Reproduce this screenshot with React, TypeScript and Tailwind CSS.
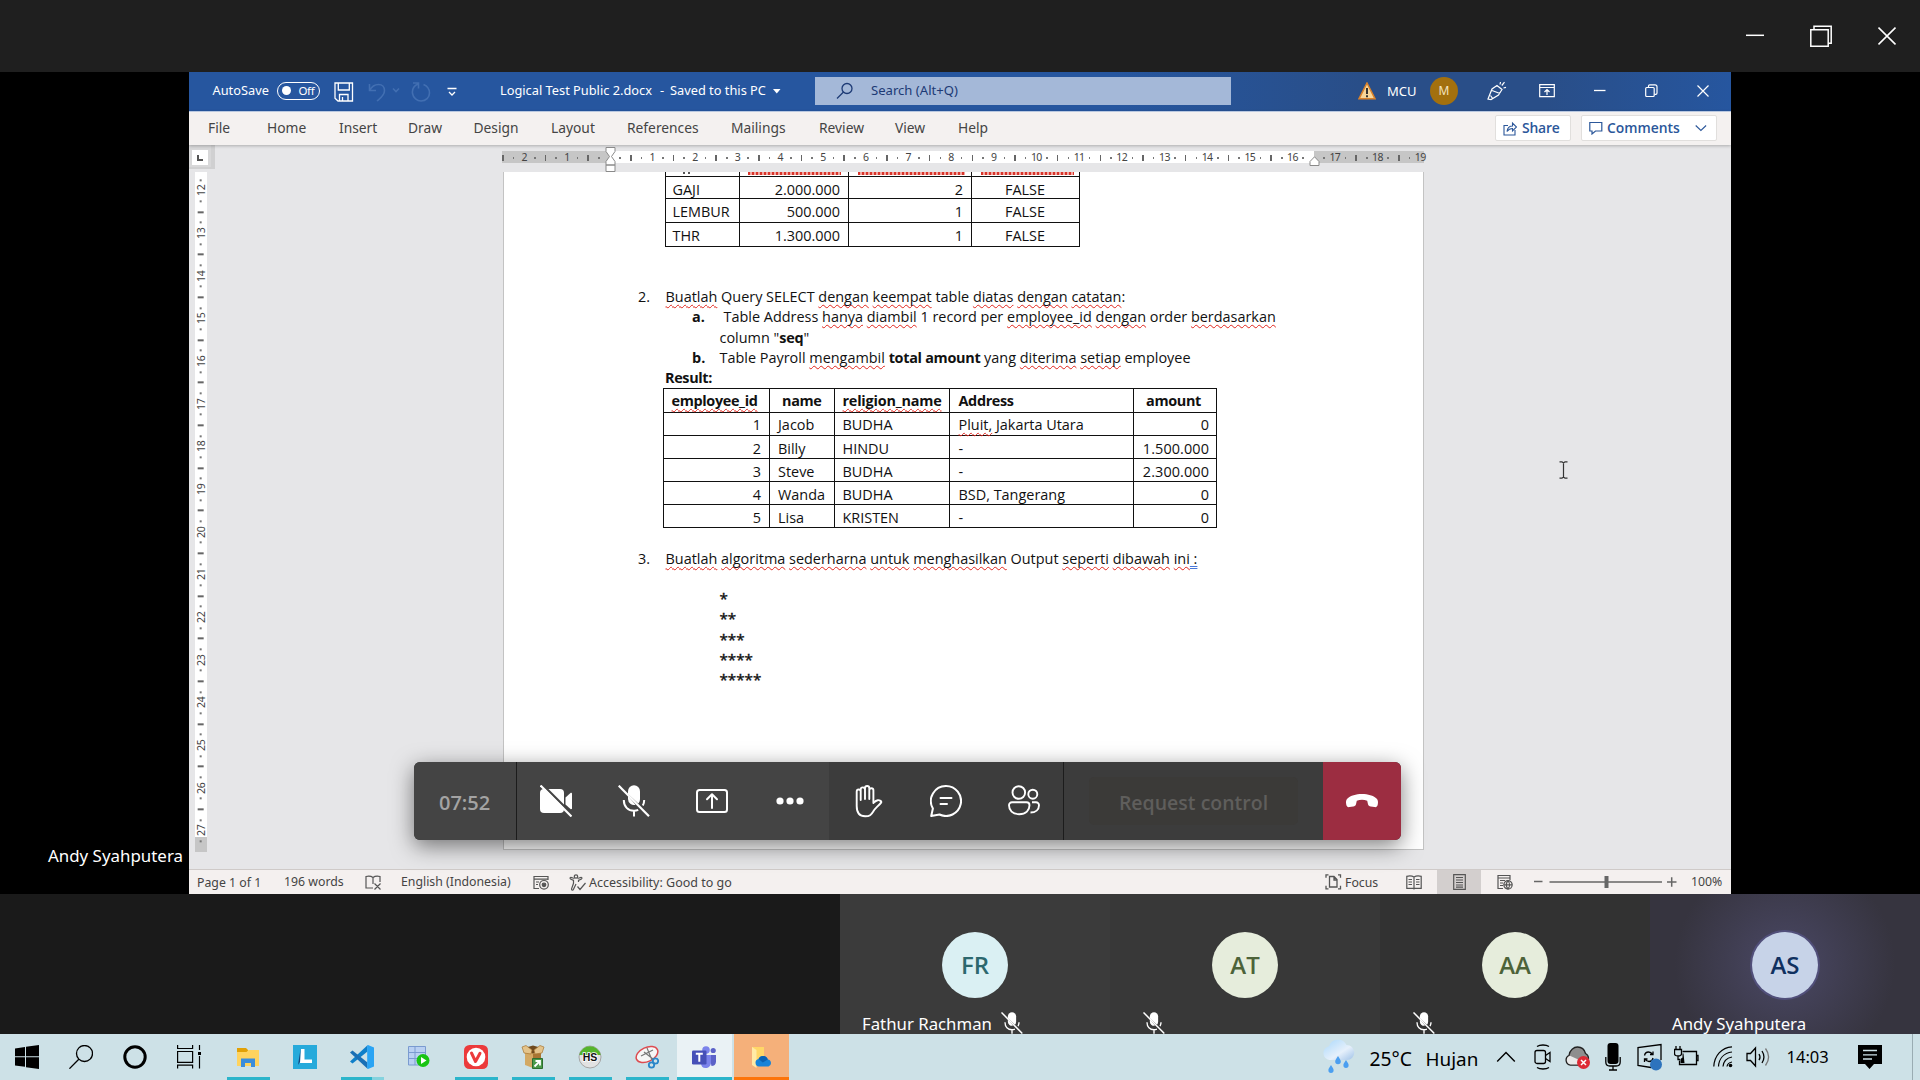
import type { ReactNode } from "react";

/* ---------- helpers ---------- */

function Misspelled({ children }: { children: ReactNode }) {
  return (
    <span className="underline decoration-[#e0241b] decoration-wavy decoration-[1.250px] underline-offset-[2px] [text-decoration-skip-ink:none]">
      {children}
    </span>
  );
}

function MicOff({ className }: { className?: string }) {
  return (
    <svg viewBox="0 0 32 32" className={className} fill="none" stroke="#fff" strokeWidth="2">
      <path d="M10 9V6.3a6 6 0 0 1 12 0V14c0 1.8-.6 3.300-1.700 4.400z" fill="#fff" stroke="none" />
      <path d="M10 11v3a6 6 0 0 0 7.500 5.800z" fill="#fff" stroke="none" />
      <path d="M5.800 15c0 6.500 4.200 10.800 10.200 10.800 1.600 0 3-.3 4.200-.9M26.200 15c0 2.100-.5 4-1.400 5.600M16 26v5.500" />
      <path d="M.7.7 31 31.200" strokeWidth="2.200" />
    </svg>
  );
}

/* ---------- Teams window chrome ---------- */

function TeamsTitleBar() {
  return (
    <div className="flex h-[72px] items-center justify-end bg-[#1f1f1f] pr-6">
      <svg width="18" height="22" fill="none" stroke="#fff" strokeWidth="1.500">
        <path d="M0 10.300h18" />
      </svg>
      <svg width="22" height="22" className="ml-[46px]" fill="none" stroke="#fff" strokeWidth="1.500">
        <path d="M.8 4.800h17.400v16.400H.8zM4 4.500V1.300h17.200v17H18.500" />
      </svg>
      <svg width="18" height="22" className="ml-[46px]" fill="none" stroke="#fff" strokeWidth="1.600">
        <path d="m.5 2.500 17 17M17.500 2.500l-17 17" />
      </svg>
    </div>
  );
}

/* ---------- Word: title bar ---------- */

function WordTitleBar() {
  return (
    <div className="flex h-[39px] items-center bg-[#26569f] bg-[linear-gradient(90deg,#26569f_0%,#26569f_60%,#294e88_76%,#294e88_88%,#26569f_100%)] pb-[2px] text-[12.8px] text-white">
      <div className="ml-[23.5px] w-[64.500px]">AutoSave</div>
      <div className="flex h-[18px] w-[43px] items-center rounded-full border border-white pl-[4px] text-[11.5px] tracking-[-0.4px]">
        <span className="h-[9px] w-[9px] rounded-full bg-white" />
        <span className="ml-[7.500px]">Off</span>
      </div>
      <svg width="20" height="20" className="ml-[14px] mt-[2px]" fill="none" stroke="#fff" strokeWidth="1.300">
        <path d="M1 1h17.500v18H4L1 16.200zM4.300 1v7h11V1M5.500 19v-6.500h8.500V19M8.500 19v-4" />
      </svg>
      <svg width="34" height="22" className="ml-[14px] mt-[2px]" fill="none" stroke="#426fb2" strokeWidth="1.600">
        <path d="M1.500 3v6.500H8M1.500 9.500C4 5 7 3.500 10.500 3.500c4 0 6 3 6 6 0 5-4 7.500-7.500 10.500" />
        <path d="m25 7.500 3 3 3-3" />
      </svg>
      <svg width="20" height="22" className="ml-[9px] mt-[2px]" fill="none" stroke="#426fb2" strokeWidth="1.600">
        <path d="M2 2h5.500v5.500M7 3C2.500 5 1 8.500 1.500 12.500 2.300 17 6 20 10 20c5 0 8.500-3.500 8.500-8 0-4-2.500-7-6-8.500" />
      </svg>
      <svg width="10" height="10" className="ml-[16px] mt-[2px]" fill="none" stroke="#fff" strokeWidth="1.300">
        <path d="M.5 1.500h9M2 5l3 3 3-3" />
      </svg>
      <div className="ml-[43px] w-[160px] whitespace-nowrap">Logical Test Public 2.docx</div>
      <div className="w-[10px]">-</div>
      <div className="w-[103px] whitespace-nowrap">Saved to this PC</div>
      <svg width="8" height="5" className="mt-px" fill="#fff">
        <path d="M0 0h7.500L3.800 4.500z" />
      </svg>
      <div className="ml-[34px] flex h-[28px] w-[416px] items-center bg-[#a4b8d8] text-[13.1px] text-[#1d3a75]">
        <svg width="18" height="18" className="ml-[21px]" fill="none" stroke="#1d3a75" strokeWidth="1.300">
          <circle cx="11" cy="6.500" r="5" />
          <path d="M7.500 10 1 16.500" />
        </svg>
        <span className="ml-[17px]">Search (Alt+Q)</span>
      </div>
      <svg width="18" height="18" className="ml-[127px] mt-px">
        <path d="M9 1 17 16.800H1z" fill="#f7d69a" stroke="#d9822b" strokeWidth="1.500" />
        <path d="M9 6v6M9 13.300v2" stroke="#222" strokeWidth="1.800" />
      </svg>
      <div className="ml-[11px] w-[43px] pt-[2px] text-[13px]">MCU</div>
      <div className="flex h-[28px] w-[28px] items-center justify-center rounded-full bg-[#a3700e] text-[12px] text-[#f3e3c0]">M</div>
      <svg width="20" height="20" className="ml-[29px]" fill="none" stroke="#fff" strokeWidth="1.200">
        <path d="m1 18 4-10 5-3.500 5 4L11.500 14 4 18.500zM3.500 14.500 6 18M5 9.500l8 3M13 3.500l.5-2.500M14.800 4.500 17.500 1.200M16.500 7l2.500-.7" />
      </svg>
      <svg width="16" height="14" className="ml-[32px]" fill="none" stroke="#fff" strokeWidth="1.200">
        <path d="M.7.7h14.600v12H.7zM.7 3.500h14.600M8 11V5.500M5.500 8 8 5.500 10.500 8" />
      </svg>
      <svg width="12" height="12" className="ml-[39px]" stroke="#fff" strokeWidth="1.300">
        <path d="M0 5.500h11.500" />
      </svg>
      <svg width="13" height="14" className="ml-[39px]" fill="none" stroke="#fff" strokeWidth="1.200">
        <rect x=".7" y="3.500" width="8.500" height="9" rx="1" />
        <path d="M3.500 3.500V2c0-.7.400-1.200 1.200-1.200H10c1.200 0 2 .8 2 2V9c0 .8-.5 1.300-1.200 1.300H9.500" />
      </svg>
      <svg width="12" height="12" className="ml-[39px]" stroke="#fff" strokeWidth="1.200">
        <path d="m.5.5 11 11M11.500.5l-11 11" />
      </svg>
    </div>
  );
}

/* ---------- Word: ribbon tabs ---------- */

const tabs: [string, string][] = [
  ["File", "w-[59px]"],
  ["Home", "w-[72px]"],
  ["Insert", "w-[69px]"],
  ["Draw", "w-[65.500px]"],
  ["Design", "w-[77.500px]"],
  ["Layout", "w-[76px]"],
  ["References", "w-[104px]"],
  ["Mailings", "w-[88px]"],
  ["Review", "w-[76px]"],
  ["View", "w-[63px]"],
  ["Help", "w-[60px]"],
];

function WordTabs() {
  return (
    <div className="relative flex h-[34px] items-center border-t border-[#b9c8e0] bg-[#f4f1f0] text-[13.800px] text-[#444] shadow-[0_1px_3px_rgba(0,0,0,0.25)]">
      <div className="ml-[19px] flex">
        {tabs.map(([label, width]) => (
          <div key={label} className={width}>{label}</div>
        ))}
      </div>
      <div className="ml-auto mr-[14px] flex gap-[10px] pb-px font-['Open_Sans'] text-[13.900px] font-semibold tracking-[-0.2px] text-[#2b579a]">
        <div className="flex h-[26px] w-[76px] items-center rounded-[2px] border border-[#e1dfdd] bg-white pl-[7px]">
          <svg width="14" height="15" fill="none" stroke="#2b579a" strokeWidth="1.100">
            <path d="M5 4.500H1v9.500h11V9M4 10.500C4.500 7 6.500 5 9.500 5V2L13.500 6l-4 4V7.500C7 7.500 5.500 8.500 4 10.500z" />
          </svg>
          <span className="ml-[5px]">Share</span>
        </div>
        <div className="flex h-[26px] w-[136px] items-center rounded-[2px] border border-[#e1dfdd] bg-white pl-[7px]">
          <svg width="14" height="14" fill="none" stroke="#2b579a" strokeWidth="1.200">
            <path d="M.8 1.500h12v8.500H6.500L3 13v-3H.8z" />
          </svg>
          <span className="ml-[4px] w-[88px] tracking-[0]">Comments</span>
          <svg width="12" height="8" fill="none" stroke="#2b579a" strokeWidth="1.100">
            <path d="m.7 1.500 5.200 5 5.200-5" />
          </svg>
        </div>
      </div>
    </div>
  );
}

/* ---------- Word: rulers ---------- */

function marks(from: number, to: number): string[] {
  const out: string[] = [];
  for (let n = from; n <= to; n++) out.push("·", "|", "·", String(n));
  return out;
}

function Mark({ m }: { m: string }) {
  return (
    <span className="flex h-full w-[10.673px] shrink-0 items-center justify-center">
      {m === "·" && <span className="h-[2px] w-[1.500px] bg-[#777]" />}
      {m === "|" && <span className="h-[6px] w-[1.500px] bg-[#666]" />}
      {m !== "·" && m !== "|" && <span className="whitespace-nowrap">{m}</span>}
    </span>
  );
}

function HorizontalRuler() {
  return (
    <div className="flex h-[27px]">
      <div className="flex h-[24px] w-[26px] items-center justify-center border-b-2 border-r-4 border-[#d0d0d1] bg-[#d8d8d9] pt-[3px]">
        <div className="flex h-[15px] w-[16px] items-center justify-center bg-white">
          <div className="h-[6px] w-[6px] border-b-2 border-l-2 border-[#555]" />
        </div>
      </div>
      <div className="relative ml-[287px] mt-[6px] flex h-[12px] text-[10.500px] leading-none tracking-[-0.6px] text-[#444]">
        <div className="flex w-[107.500px] bg-[#c6c6c6] pt-px">
          <div className="-ml-[4.500px] flex">
            {["|", "·", "2", "·", "|", "·", "1", "·", "|", "·"].map((m, i) => <Mark key={i} m={m} />)}
          </div>
        </div>
        <div className="flex w-[704px] bg-white pl-[5.300px] pt-px">
          {[...marks(1, 16), "·"].map((m, i) => <Mark key={i} m={m} />)}
        </div>
        <div className="flex w-[110px] bg-[#c6c6c6] pl-[5.300px] pt-px">
          {["·", "17", ...marks(18, 19)].map((m, i) => <Mark key={i} m={m} />)}
        </div>
        <svg width="12" height="26" className="absolute -top-[4px] left-[103px]" fill="#fff" stroke="#8a8a8a">
          <path d="M1 .5h9v4L6.500 9.500 10 14.500v3.500H1v-3.500L4.500 9.500 1 4.500zM1 18h9v6.500H1z" />
        </svg>
        <svg width="12" height="10" className="absolute left-[807px] top-[5px]" fill="#fff" stroke="#8a8a8a">
          <path d="M1 9.500v-4L5.500.8 10 5.500v4z" />
        </svg>
      </div>
    </div>
  );
}

function VerticalRuler() {
  const seq = ["·", "12", ...marks(13, 27)];
  return (
    <div className="ml-[6px] flex h-[680px] w-[12px] flex-col items-center overflow-hidden bg-[linear-gradient(#fff_0_665px,#c6c6c6_665px)] pt-[2.500px] text-[10.500px] leading-none tracking-[-0.4px] text-[#444]">
      {[...seq, "·"].map((m, i) => (
        <span key={i} className="flex h-[10.673px] w-[12px] shrink-0 -rotate-90 items-center justify-center">
          {m === "·" && <span className="h-[2px] w-[1.500px] bg-[#777]" />}
          {m === "|" && <span className="h-[6px] w-[1.500px] bg-[#666]" />}
          {m !== "·" && m !== "|" && <span className="whitespace-nowrap">{m}</span>}
        </span>
      ))}
    </div>
  );
}

/* ---------- Word: document ---------- */

const payroll = [
  ["GAJI", "2.000.000", "2", "FALSE", "h-[22.400px]"],
  ["LEMBUR", "500.000", "1", "FALSE", "h-[24px]"],
  ["THR", "1.300.000", "1", "FALSE", "h-[22.400px]"],
];

function Squiggle({ className }: { className: string }) {
  return (
    <span
      className={"block h-[3px] bg-[repeating-linear-gradient(90deg,#d8352b_0_2px,#f2a49e_2px_4px)] " + className}
    />
  );
}

function PayrollTable() {
  return (
    <div className="ml-[160.500px] w-[415px] border-b-[1.500px] border-l-[1.500px] border-[#111]">
      <div className="grid h-[5px] grid-cols-[74px_109px_123px_108px] border-b-[1.500px] border-[#111] [&>*]:border-r-[1.500px] [&>*]:border-[#111]">
        <div className="flex gap-[3px] pl-[17px]">
          <span className="h-[2px] w-[2px] bg-[#555]" />
          <span className="h-[2px] w-[2px] bg-[#555]" />
        </div>
        <div className="pl-[8px]"><Squiggle className="w-[93px]" /></div>
        <div className="pl-[9px]"><Squiggle className="w-[107px]" /></div>
        <div className="pl-[9px]"><Squiggle className="w-[93px]" /></div>
      </div>
      {payroll.map(([kind, amount, qty, flag, h], i) => (
        <div
          key={kind}
          className={
            "grid grid-cols-[74px_109px_123px_108px] items-stretch border-[#111] [&>*]:border-r-[1.500px] [&>*]:border-[#111] [&>*]:pt-[3px] " +
            h + (i < 2 ? " border-b-[1.500px]" : "")
          }
        >
          <div className="pl-[7px]">{kind}</div>
          <div className="pr-[7.500px] text-right">{amount}</div>
          <div className="pr-[7.500px] text-right">{qty}</div>
          <div className="text-center">{flag}</div>
        </div>
      ))}
    </div>
  );
}

const employees: [string, string, string, ReactNode, string][] = [
  ["1", "Jacob", "BUDHA", <><Misspelled>Pluit,</Misspelled> Jakarta Utara</>, "0"],
  ["2", "Billy", "HINDU", "-", "1.500.000"],
  ["3", "Steve", "BUDHA", "-", "2.300.000"],
  ["4", "Wanda", "BUDHA", "BSD, Tangerang", "0"],
  ["5", "Lisa", "KRISTEN", "-", "0"],
];

function ResultTable() {
  const row =
    "grid grid-cols-[106px_64.500px_115px_184px_83px] border-b-[1.500px] border-[#111] leading-[20px] [&>*]:border-r-[1.500px] [&>*]:border-[#111] [&>*]:pt-[2.500px] ";
  return (
    <div className="ml-[159px] w-[554px] border-l-[1.500px] border-t-[1.500px] border-[#111]">
      <div className={row + "h-[24px] font-bold tracking-[-0.350px]"}>
        <div className="pl-[7.500px]"><Misspelled>employee_id</Misspelled></div>
        <div className="text-center">name</div>
        <div className="pl-[8px] tracking-[-0.2px]"><Misspelled>religion_name</Misspelled></div>
        <div className="pl-[9px]">Address</div>
        <div className="pr-[2px] text-center">amount</div>
      </div>
      {employees.map(([id, name, religion, address, amount]) => (
        <div key={id} className={row + "h-[23.100px]"}>
          <div className="pr-[8px] text-right">{id}</div>
          <div className="pl-[8px]">{name}</div>
          <div className="pl-[8px]">{religion}</div>
          <div className="pl-[9px]">{address}</div>
          <div className="pr-[6.500px] text-right tracking-[0.100px]">{amount}</div>
        </div>
      ))}
    </div>
  );
}

function Page() {
  return (
    <div className="h-[678px] w-[921px] overflow-hidden border-b border-l border-r border-[#c3c3c3] bg-white font-['Open_Sans'] text-[14.430px] leading-[20.400px] text-[#111]">
      <PayrollTable />
      <div className="mt-[40px] flex">
        <div className="ml-[134px] w-[27.500px]">2.</div>
        <div className="whitespace-nowrap">
          <Misspelled>Buatlah</Misspelled> Query SELECT <Misspelled>dengan</Misspelled> <Misspelled>keempat</Misspelled> table{" "}
          <Misspelled>diatas</Misspelled> <Misspelled>dengan</Misspelled> <Misspelled>catatan</Misspelled>:
        </div>
      </div>
      <div className="flex">
        <div className="ml-[188px] w-[31.500px] font-bold">a.</div>
        <div className="whitespace-nowrap">
          Table Address <Misspelled>hanya</Misspelled> <Misspelled>diambil</Misspelled> 1 record per{" "}
          <Misspelled>employee_id</Misspelled> <Misspelled>dengan</Misspelled> order <Misspelled>berdasarkan</Misspelled>
        </div>
      </div>
      <div className="ml-[215.500px]">
        column "<span className="font-bold tracking-[-0.200px]">seq</span>"
      </div>
      <div className="flex">
        <div className="ml-[188px] w-[27.500px] font-bold">b.</div>
        <div className="whitespace-nowrap">
          Table Payroll <Misspelled>mengambil</Misspelled> <span className="font-bold tracking-[-0.300px]">total amount</span> yang{" "}
          <Misspelled>diterima</Misspelled> <Misspelled>setiap</Misspelled> employee
        </div>
      </div>
      <div className="ml-[161px] h-[19.500px] font-bold tracking-[-0.350px]">Result:</div>
      <ResultTable />
      <div className="mt-[21px] flex">
        <div className="ml-[134px] w-[27.500px]">3.</div>
        <div className="whitespace-nowrap">
          <Misspelled>Buatlah</Misspelled> <Misspelled>algoritma</Misspelled> <Misspelled>sederharna</Misspelled>{" "}
          <Misspelled>untuk</Misspelled> <Misspelled>menghasilkan</Misspelled> Output <Misspelled>seperti</Misspelled>{" "}
          <Misspelled>dibawah</Misspelled> <Misspelled>ini</Misspelled>
          <span className="underline decoration-[#4a78d8] decoration-double decoration-1 underline-offset-[2px]">&nbsp;:</span>
        </div>
      </div>
      <div className="ml-[215.500px] mt-[18px] text-[15.200px] [-webkit-text-stroke:0.400px_#111]">
        {["*", "**", "***", "****", "*****"].map((s) => (
          <div key={s} className="h-[20.400px]">{s}</div>
        ))}
      </div>
    </div>
  );
}

/* ---------- Word: status bar ---------- */

function WordStatusBar() {
  return (
    <div className="flex h-[25px] items-center border-t border-[#cfcac8] bg-[#f4f0ef] text-[12.300px] text-[#444]">
      <div className="ml-[8px] w-[87px] pt-[2px]">Page 1 of 1</div>
      <div className="w-[80.500px]">196 words</div>
      <svg width="18" height="15" fill="none" stroke="#555" strokeWidth="1.200">
        <path d="M8 2.500C6 1 3 1 1 1.500v11.500h7M8 2.500V9M8 2.500C10 1 13 1 15 1.500V7M9.500 8.500l6 6M15.500 8.500l-6 6" />
      </svg>
      <div className="ml-[18.500px] w-[132px] whitespace-nowrap">English (Indonesia)</div>
      <svg width="17" height="15" fill="none" stroke="#555" strokeWidth="1.200">
        <path d="M6 13.500H1v-12h14V5M1 4.200h14M3 7h3M3 9.500h2" />
        <circle cx="11" cy="9.800" r="4.300" />
        <circle cx="11" cy="9.800" r="1.800" fill="#555" />
      </svg>
      <svg width="18" height="17" className="ml-[19px]" fill="none" stroke="#555" strokeWidth="1.200">
        <circle cx="7" cy="2.500" r="1.700" />
        <path d="M5.500 4.500C3.500 4 1 2.500 1 4.300c0 1 2 1.500 3.500 2v3L2.500 15c0 1.500 1.500 1.500 2 .3L7 10M8.500 4.500c2-.5 4.500-2 4.500-.2 0 1-2 1.500-3.500 2V8M8.500 12.500l2.500 3 5.500-6.500" />
      </svg>
      <div className="ml-[2px] whitespace-nowrap pt-[2px] text-[12.500px]">Accessibility: Good to go</div>
      <div className="ml-auto flex h-full items-center">
        <svg width="17" height="16" fill="none" stroke="#555" strokeWidth="1.300">
          <path d="M3.500.8H1v3M1 11.800v3h2.500M13 .8h2.500v3M15.500 11.800v3H13M4.500 2.500h4.500l3 3v7.500H4.500zM9 2.500V6h3" />
        </svg>
        <div className="ml-[3px] w-[61px] pt-[2px]">Focus</div>
        <svg width="16" height="15" fill="none" stroke="#555" strokeWidth="1.200">
          <path d="M8 2C6 .8 3 .8.8 1.300v12h6.500l.7.700.7-.7h6.500v-12C13 .8 10 .8 8 2zM8 2v12M2.500 4.500h3.500M2.500 7h3.500M2.500 9.500h3.500M10 4.500h3.500M10 7h3.500M10 9.500h3.500" />
        </svg>
        <div className="ml-[15px] flex h-full w-[44px] items-center justify-center bg-[#d3cfce]">
          <svg width="13" height="16" fill="none" stroke="#555" strokeWidth="1.200">
            <path d="M.7.700h11.600v14.600H.7zM3 3.500h7M3 6h7M3 8.500h7M3 11h7M3 13.200h7" />
          </svg>
        </div>
        <svg width="16" height="16" className="ml-[16px]" fill="none" stroke="#555" strokeWidth="1.200">
          <path d="M6 14.500H1v-13h12V6M1 4h12M3 6.500h5M3 9h3M3 11.500h3" />
          <circle cx="11" cy="10.800" r="4.200" />
          <path d="M7 10.800h8M11 6.600c-2 2.500-2 6 0 8.400 2-2.400 2-6 0-8.400z" />
        </svg>
        <svg width="143" height="16" className="ml-[21px]" fill="none" stroke="#666" strokeWidth="1.500">
          <path d="M0 7.500h8.500M15.500 8H128M133 8h9.500M137.700 3.300v9.400" />
          <path d="M72.500 2v12" strokeWidth="4" />
        </svg>
        <div className="ml-[14px] w-[40px]">100%</div>
      </div>
    </div>
  );
}

/* ---------- Teams: call controls ---------- */

function CallControls() {
  const slot = "flex h-full w-[78px] items-center justify-center";
  return (
    <div className="absolute left-[414px] top-[762px] flex h-[78px] w-[987px] overflow-hidden rounded-[6px] bg-[#3c3c3c] text-[20px] shadow-[0_6px_22px_rgba(0,0,0,0.5)]">
      <div className="flex w-[103px] items-center border-r border-[#1c1c1c] bg-[#444] pl-[25px] pt-[3px] font-['Open_Sans'] font-semibold text-[#a3a3a3]">
        07:52
      </div>
      <div className="flex w-[312px] bg-[#444]">
        <div className={slot}>
          <svg width="32" height="32">
            <rect x="0" y="4" width="24" height="24" rx="4" fill="#fff" />
            <path d="M25.500 12.500 30.500 8c.6-.5 1.500-.1 1.500.7v14.600c0 .8-.9 1.200-1.500.7l-5-4.500z" fill="#fff" />
            <path d="M1.600-1.200 33 30.200" stroke="#444" strokeWidth="2.400" />
            <path d="m.5.5 31 31" stroke="#fff" strokeWidth="2.200" />
          </svg>
        </div>
        <div className={slot}><MicOff className="h-8 w-8" /></div>
        <div className={slot}>
          <svg width="32" height="32" fill="none" stroke="#fff" strokeWidth="2" strokeLinecap="round" strokeLinejoin="round">
            <rect x="1" y="5" width="30" height="22" rx="2.500" />
            <path d="M16 23V9.500M11 14.200l5-5 5 5" />
          </svg>
        </div>
        <div className={slot}>
          <svg width="28" height="8" fill="#fff">
            <circle cx="4" cy="4" r="3.600" /><circle cx="14" cy="4" r="3.600" /><circle cx="24" cy="4" r="3.600" />
          </svg>
        </div>
      </div>
      <div className="flex w-[234px]">
        <div className={slot}>
          <svg width="32" height="33" fill="none" stroke="#fff" strokeWidth="1.900" strokeLinecap="round" strokeLinejoin="round">
            <path d="M8.700 15V6.500a2 2 0 0 0-4 0V21c0 6.500 3 10.300 8.500 10.300 4.500 0 6-1.300 8-4.800 1.500-2.800 4-4.500 8-9 .8-1-1.500-2.600-3.500-2.300-2 .3-3 1.500-4.300 2.800V5.300a2 2 0 0 0-4.100 0V14M17.300 14V3.200a2.100 2.100 0 0 0-4.300 0V14M13 14V4.500a2.100 2.100 0 0 0-4.300 0V15" />
          </svg>
        </div>
        <div className={slot}>
          <svg width="32" height="32" fill="none" stroke="#fff" strokeWidth="2" strokeLinecap="round" strokeLinejoin="round">
            <path d="M16 1a15 15 0 1 1-6.500 28.500L1.200 31l1.700-7.500A15 15 0 0 1 16 1zM10.500 13h11M10.500 19h6.500" />
          </svg>
        </div>
        <div className={slot}>
          <svg width="32" height="32" fill="none" stroke="#fff" strokeWidth="1.900">
            <circle cx="10.800" cy="7.500" r="6.300" />
            <circle cx="24.800" cy="9.200" r="4.500" />
            <path d="M4 17.200h14.500a3 3 0 0 1 3 3c0 5-3.500 9-10.300 9S1 25.200 1 20.200a3 3 0 0 1 3-3zM24 17.200h4a3 3 0 0 1 3 3c0 4.500-3.500 7.300-8.500 7.300" />
          </svg>
        </div>
      </div>
      <div className="flex w-[260px] items-center border-l border-[#1c1c1c] pl-[25px]">
        <div className="flex h-[48px] w-[209px] items-center justify-center rounded-[5px] bg-[#3b3a38] pt-[3px] font-['Open_Sans'] text-[19.500px] font-semibold text-[#5f5e5c]">
          Request control
        </div>
      </div>
      <div className="flex w-[78px] items-center justify-center bg-[#9c2d41]">
        <svg width="32" height="14" fill="#fff">
          <path d="M16 0c6 0 11.500 1.600 14.500 4.400 1.700 1.600 1.700 4 1.200 6.400-.3 1.700-1.500 2.600-3.200 2.300l-3.800-.6c-1.400-.2-2.300-1-2.700-2.300l-.8-3.400C19.500 6 17.800 5.700 16 5.700s-3.500.3-5.200 1.100L10 10.200c-.4 1.300-1.300 2.100-2.700 2.300l-3.800.6C1.800 13.400.6 12.500.3 10.800-.2 8.400-.2 6 1.500 4.400 4.500 1.600 10 0 16 0z" />
        </svg>
      </div>
    </div>
  );
}

/* ---------- Teams: participants ---------- */

function Gallery() {
  const name = "h-[24px] whitespace-nowrap text-[16.800px] leading-[24px] text-white";
  const avatar = "flex h-[66px] w-[66px] shrink-0 items-center justify-center rounded-full font-['Open_Sans'] text-[24px] font-semibold";
  const tile = "flex h-[140px] w-[270px] flex-col items-center overflow-hidden pt-[38px]";
  const footer = "mt-[14px] flex w-full items-start";
  return (
    <div className="flex h-[140px] justify-end bg-[#1a1a1a]">
      <div className={tile + " bg-[#3b3b3b]"}>
        <div className={avatar + " bg-[#daf0f3] text-[#2c686e]"}>FR</div>
        <div className={footer}>
          <span className={name + " ml-[22px] w-[139px]"}>Fathur Rachman</span>
          <MicOff className="h-[22px] w-[22px]" />
        </div>
      </div>
      <div className={tile + " bg-[#383838]"}>
        <div className={avatar + " bg-[#e6eddc] text-[#4d6339]"}>AT</div>
        <div className={footer}><MicOff className="ml-[33px] h-[22px] w-[22px]" /></div>
      </div>
      <div className={tile + " bg-[#323232]"}>
        <div className={avatar + " bg-[#e6eddc] text-[#4d6339]"}>AA</div>
        <div className={footer}><MicOff className="ml-[33px] h-[22px] w-[22px]" /></div>
      </div>
      <div className={tile + " bg-[#36343f] bg-[radial-gradient(circle_at_50%_50%,#4a4865_0,#3f3d50_60px,#36343f_110px)]"}>
        <div className={avatar + " bg-[#c7d3e8] text-[#10305f] ring-2 ring-[#514f7a]"}>AS</div>
        <div className={footer}><span className={name + " ml-[22px]"}>Andy Syahputera</span></div>
      </div>
    </div>
  );
}

/* ---------- Windows taskbar ---------- */

function Task({ bar, bg = "", children }: { bar?: string; bg?: string; children: ReactNode }) {
  return (
    <div className="flex h-[46px] w-[57px] justify-center">
      <div className={"flex h-full flex-col items-center pt-[11px] " + (bg ? "w-[55px] " + bg : "w-[43px]")}>
        <svg width="24" height="24" className="mr-px">{children}</svg>
        <div className={"mt-auto h-[3px] w-full " + (bar ?? "")} />
      </div>
    </div>
  );
}

function Taskbar() {
  const sys = "flex h-[46px] w-[54px] items-start justify-center pt-[11px]";
  return (
    <div className="flex h-[46px] bg-[#cde1e7] text-black">
      <div className={sys}>
        <svg width="24" height="24"><path d="M0 3.400 10 2v9.300H0zM11 1.800 24 0v11.300H11zM0 12.300h10v9.500L0 20.500zM11 12.300h13V24l-13-1.800z" /></svg>
      </div>
      <div className={sys}>
        <svg width="24" height="24" fill="none" stroke="#000" strokeWidth="1.300"><circle cx="15.500" cy="8.500" r="8" /><path d="M9.800 14.200.4 23.700" /></svg>
      </div>
      <div className={sys}>
        <svg width="24" height="24" fill="none" stroke="#000" strokeWidth="3"><circle cx="12" cy="12" r="10.200" /></svg>
      </div>
      <div className={sys}>
        <svg width="24" height="24" fill="none" stroke="#000" strokeWidth="1.200"><path d="M.6 0v3.500h15V0M.6 6.500h15v10.800H.6zM.6 23.500v-3.300h15v3.300M22.500 0v5M22.500 11v12.500" /><path d="M21 7h3v3h-3z" fill="#000" stroke="none" /></svg>
      </div>
      <div className="ml-[4px] flex">
        <Task bar="bg-[#2cb5cb]">
          <path d="M1 3h9l2 2v4H1z" fill="#e2a106" />
          <path d="M1 7h9.500L12.500 5H23v16H1z" fill="#ffd35e" />
          <path d="M5 22v-8.500h14V22h-4v-4H9v4z" fill="#3b8ddb" />
        </Task>
        <Task>
          <path d="M0 0h24v24H0z" fill="#26aadb" />
          <path d="m5 20 2.500-16v12z" fill="#17477e" />
          <path d="M8 4h3.500v10.500H19V18H7z" fill="#fff" />
        </Task>
        <Task bar="bg-[linear-gradient(90deg,#2cb5cb_0_31px,#84d2de_31px)]">
          <path d="M17.500 6.500 2.500 18.500 0 16.500 17.500.2z" fill="#0f7fc9" />
          <path d="m17.500 17.500-15-12L0 7.500l17.500 16.300z" fill="#1a6fb5" />
          <path d="M18 0 24 2.500v19L18 24l-.8-.5V.500z" fill="#2aa4f4" />
        </Task>
        <Task>
          <path d="M1.500 1.500h17v18.500h-17z" fill="#b9d0f2" stroke="#7a9bd0" />
          <path d="M1.500 7.500h17M1.500 13.500h17M8 1.500V20" stroke="#7a9bd0" fill="none" />
          <circle cx="16" cy="15.500" r="6.500" fill="#18c413" />
          <path d="m14 12 5.500 3.500-5.500 3.500z" fill="#fff" />
        </Task>
        <Task bar="bg-[#2cb5cb]">
          <rect width="24" height="24" rx="5.500" fill="#ec3a3b" />
          <circle cx="12" cy="12" r="9.300" fill="#fff" />
          <path d="m7.500 8 4 8.500L16 8.300" fill="none" stroke="#ec3a3b" strokeWidth="3" strokeLinecap="round" strokeLinejoin="round" />
        </Task>
        <Task bar="bg-[#2cb5cb]">
          <path d="M4 7h16v13l-8 3-8-3z" fill="#d3a964" />
          <path d="M12 9v14l8-3V7z" fill="#a87532" />
          <path d="m5 2.500 7-2 7 2-1 4-6 2-6-2z" fill="#6f4a1e" />
          <path d="m1 2 4-1.500 6 4.500-1 4-7-1zM23 2l-4-1.500L13 5l1 4 7-1z" fill="#e4c48b" stroke="#a87532" strokeWidth=".7" />
          <path d="M11.500 13.500h10v10h-10z" fill="#4a9a4a" stroke="#2d6e2f" />
          <path d="m13.500 21.500 5-5M14.500 16h4.500v4.500" stroke="#fff" strokeWidth="1.800" fill="none" />
        </Task>
        <Task bar="bg-[#2cb5cb]">
          <circle cx="12" cy="12" r="11" fill="#e2e2e2" stroke="#a5a5a5" />
          <path d="M1.300 10a10.900 10.900 0 0 1 21.400 0z" fill="#54b52c" />
          <text x="12" y="16" textAnchor="middle" fontSize="10.500" fontWeight="700" fontFamily="Liberation Sans" fill="#111" stroke="#fff" strokeWidth="1.500" paintOrder="stroke">HS</text>
        </Task>
        <Task bar="bg-[#2cb5cb]">
          <ellipse cx="12" cy="9.500" rx="11.500" ry="7" transform="rotate(-25 12 9.500)" fill="#f6f6f6" stroke="#dd4b50" strokeWidth="1.500" />
          <path d="m6 11 12-6M12 3l5 12M9 7l9 7" stroke="#777" strokeWidth="1.200" fill="none" />
          <circle cx="16.500" cy="20" r="2.700" fill="none" stroke="#2a86c9" strokeWidth="1.800" />
          <circle cx="20.500" cy="16" r="2.700" fill="none" stroke="#2a86c9" strokeWidth="1.800" />
        </Task>
        <Task bar="bg-[#2cb5cb]" bg="bg-[#eaf2f5]">
          <circle cx="21.200" cy="5.500" r="2.600" fill="#5b62c8" />
          <circle cx="14" cy="5" r="3.800" fill="#7b83eb" />
          <path d="M17 10h7v6.500c0 3-2 4.500-4.500 4.500z" fill="#5b62c8" />
          <path d="M9 10h10v7.500c0 3.500-2.500 5.500-5.500 5.500S9 21 9 18z" fill="#7b83eb" />
          <rect y="5.500" width="14.500" height="14" rx="1.300" fill="#4650b8" />
          <path d="M3.800 8.800h7M7.300 8.800v8" stroke="#fff" strokeWidth="2" />
        </Task>
        <Task bar="bg-[#fd7409]" bg="bg-[#f5b07a]">
          <path d="M3 2h12v18H3z" fill="#ffd668" />
          <path d="m3 2 4.500 3v18L3 20z" fill="#ffeaa6" />
          <path d="M10 21.500a3.800 3.800 0 0 1-.5-7.500 5 5 0 0 1 9.300.5 3.600 3.600 0 0 1 .7 7z" fill="#1683d8" />
          <path d="M9.500 14a5 5 0 0 1 9.300.5l-5 3z" fill="#0a62b3" />
        </Task>
      </div>
      <div className="ml-auto flex items-center text-[19px]">
        <svg width="34" height="36" className="mr-[15px]">
          <defs>
            <linearGradient id="cloud" x1="0" y1="0" x2="1" y2="1">
              <stop offset="0" stopColor="#a9d8fb" />
              <stop offset=".6" stopColor="#e6f0fb" />
              <stop offset="1" stopColor="#9fc2e8" />
            </linearGradient>
          </defs>
          <path d="M8.500 21a7 7 0 0 1-.5-13.800A9.500 9.500 0 0 1 25.500 6 7.500 7.500 0 0 1 26 21z" fill="url(#cloud)" />
          <path d="M17 17c2 3 2.800 4.300 2.800 5.500a2.800 2.800 0 0 1-5.600 0c0-1.200.8-2.500 2.800-5.500zM25 21c2 3 2.600 4 2.600 5.300a2.600 2.600 0 0 1-5.200 0c0-1.300.6-2.300 2.600-5.300zM10 26c2 3 2.600 4 2.600 5.300a2.600 2.600 0 0 1-5.200 0c0-1.300.6-2.300 2.600-5.300z" fill="#4b9ff0" />
        </svg>
        <div className="w-[56px] pt-[4px] text-[19.300px]">25°C</div>
        <div className="w-[70px] pt-[4px] text-[18.900px]">Hujan</div>
        <svg width="20" height="12" fill="none" stroke="#000" strokeWidth="1.400"><path d="m1.200 10.500 8.800-9 8.800 9" /></svg>
        <svg width="18" height="26" className="ml-[18px]" fill="none" stroke="#000" strokeWidth="1.300">
          <rect x="1" y="6.500" width="10.500" height="13" rx="2" />
          <path d="m11.500 11.500 4.500-3v9l-4.500-3M3 2.500c3-2 9-2 12 0M3 23.500c3 2 9 2 12 0" />
        </svg>
        <svg width="26" height="26" className="ml-[13px]">
          <path d="M5.500 21A5 5 0 0 1 4 11.500C4.500 6 9 3 12.500 3c4 0 7 2.500 8 6.500 2 1 3 3 3 5L14 21z" fill="#8e8e8e" stroke="#222" strokeWidth="1.300" />
          <path d="M5.500 20.500a4.500 4.500 0 0 1-.5-8.700l11 5-2 3.700z" fill="#e9e9e9" />
          <circle cx="18.500" cy="18.500" r="6.500" fill="#dd2a35" />
          <path d="m16 16 5 5M21 16l-5 5" stroke="#fff" strokeWidth="1.500" />
        </svg>
        <svg width="16" height="28" className="ml-[14px]" fill="none" stroke="#000" strokeWidth="1.300">
          <rect x="2.500" y="0" width="11" height="21" rx="3" fill="#000" stroke="none" />
          <path d="M.8 14v5c0 2.500 1.500 4 4 4h6.400c2.500 0 4-1.500 4-4v-5M8 23v4M4 27h8" />
        </svg>
        <svg width="26" height="28" className="ml-[16px]" fill="none" stroke="#000" strokeWidth="1.300">
          <path d="M14 24.500 1 22.500V4.500L24 1.500V17" />
          <path d="M7.500 12.500c.5-2.500 2-3.500 4-3.500s3.200 1 4 2.500M16 8.500v3h-3M16 15c-.5 2.500-2 3.500-4 3.500s-3.200-1-4-2.500M7.500 19v-3h3" />
          <circle cx="19" cy="21.500" r="6" fill="#2d73bd" stroke="none" />
        </svg>
        <svg width="25" height="24" className="ml-[11px]" fill="none" stroke="#000" strokeWidth="1.300">
          <path d="M8.500 6.500h14v13h-17v-4M22.500 10.500H24v5h-1.500" />
          <path d="M9.500 8.500h-1v4l-2 1.500v4h4z" fill="#000" stroke="none" />
          <path d="M2 1v3.500M6 1v3.500M.5 4.500h7v4c0 1.500-1 2.500-3.500 2.500S.5 10 .5 8.500zM4 11v3.500h2" />
        </svg>
        <svg width="20" height="22" className="ml-[14px]" fill="none" stroke="#000" strokeWidth="1.200">
          <path d="M.8 20.500C1.300 9.500 8.500 1.500 19 .8M5.500 20.500C6 12.500 11 7 19 6M10 20.500c.5-5 3.500-8.500 9-9.500M14 20.500c.3-2.500 2-4 5-4.500" />
          <circle cx="17.500" cy="19.500" r="1.800" fill="#000" stroke="none" />
        </svg>
        <svg width="24" height="22" className="ml-[13px]" fill="none" stroke="#000" strokeWidth="1.300">
          <path d="M1 7.500h3.500L9.500 2v18l-5-5.500H1zM13 8c1.300 2 1.300 4.200 0 6.200M16 5c2.600 4 2.600 8 0 12" />
          <path d="M19.500 2.500c4 5.500 4 11.500 0 17" stroke="#777" />
        </svg>
        <div className="ml-[17px] w-[71.500px] text-[16.500px]">14:03</div>
        <svg width="24" height="25"><path d="M0 0h24v19h-8l-4.500 5L7 19H0z" /><path d="M5 5.500h14M5 9.800h14M5 14h9" stroke="#cde1e7" strokeWidth="1.300" /></svg>
        <div className="ml-[30px] h-[46px] w-[8px] border-l border-[#9aacb3]" />
      </div>
    </div>
  );
}

/* ---------- Screen ---------- */

export default function App() {
  return (
    <div className="relative h-[1080px] w-[1920px] overflow-hidden bg-black font-['Noto_Sans','Open_Sans',sans-serif]">
      <TeamsTitleBar />
      <div className="flex h-[822px]">
        <div className="flex w-[189px] items-end justify-end pb-[26px] pr-[6px] text-[16.900px] leading-[24px] text-white">
          Andy Syahputera
        </div>
        <div className="flex w-[1542px] flex-col">
          <WordTitleBar />
          <WordTabs />
          <div className="h-[724px] bg-[#e6e6e8]">
            <HorizontalRuler />
            <div className="flex">
              <VerticalRuler />
              <div className="ml-[296px]"><Page /></div>
            </div>
          </div>
          <WordStatusBar />
        </div>
      </div>
      <Gallery />
      <Taskbar />
      <CallControls />
      <svg width="9" height="18" className="absolute left-[1559px] top-[461px]" fill="none" stroke="#333" strokeWidth="1.200">
        <path d="M.5.800h2.500L4.500 2 6 .8h2.500M4.500 2v14M.5 17.200h2.500L4.500 16 6 17.200h2.500" />
      </svg>
    </div>
  );
}
